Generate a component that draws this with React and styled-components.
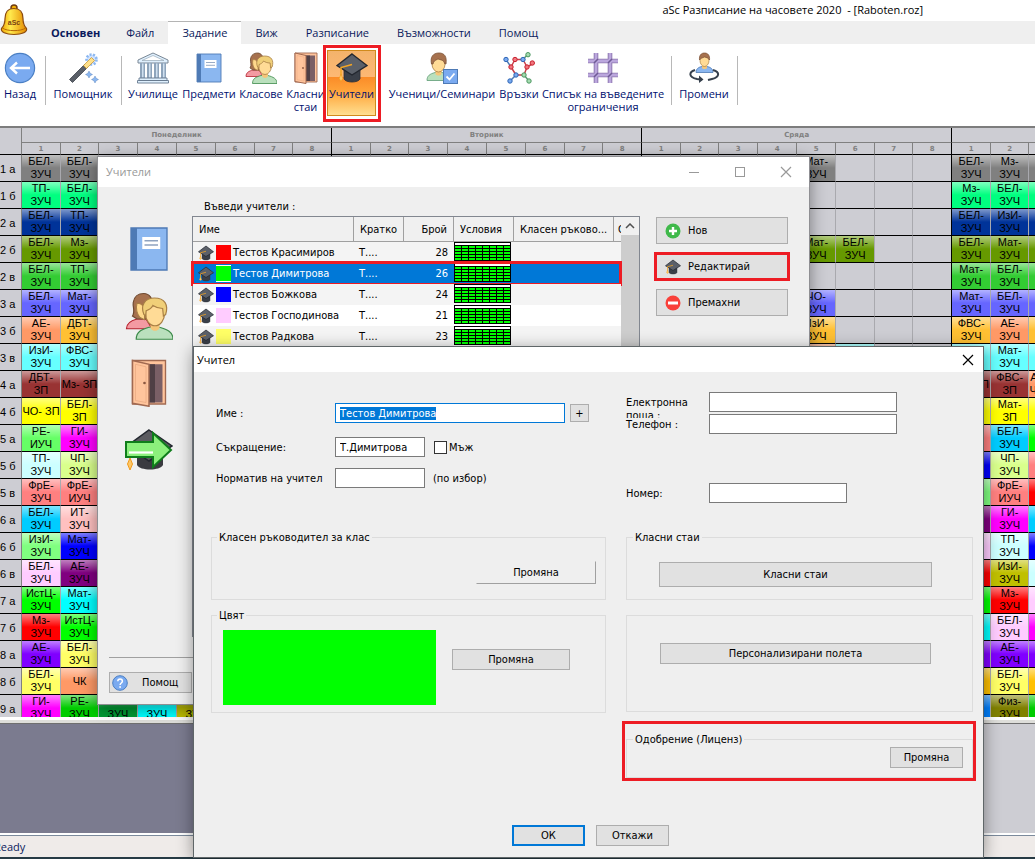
import React, { useEffect, useRef } from 'react';
import styled, { createGlobalStyle, css } from 'styled-components';

const UI = '"Open Sans", "Noto Sans", sans-serif';
const DIALOG = '"DejaVu Sans Condensed", "DejaVu Sans", sans-serif';
const GRID = '"Liberation Sans", Arial, sans-serif';
const RED = '#ed1c24';

const GlobalStyle = createGlobalStyle`
  *, *::before, *::after { box-sizing: border-box; }
  body { margin: 0; background: #fff; font-family: ${UI}; font-size: 11px; color: #000; }
  button, input { font: inherit; color: inherit; margin: 0; }
  ::selection { background: #0078d7; color: #fff; }
`;

/* ---------- icons ---------- */

const Icon = ({ size = 32, children, box = '0 0 32 32' }) => (
  <svg width={size} height={size} viewBox={box} aria-hidden="true">{children}</svg>
);

const BackIcon = () => (
  <Icon>
    <circle cx="16" cy="16" r="14.6" fill="#7aaaf0" stroke="#4a7fc4" strokeWidth="1.2" />
    <path d="M26 16H8M13 10.5L7 16l6 5.5" fill="none" stroke="#fff" strokeWidth="2.4" />
  </Icon>
);

const WandIcon = () => (
  <Icon>
    <circle cx="24.500" cy="7.500" r="5" fill="#cfe2ff" stroke="#8bb7f0" strokeWidth="2.600" strokeDasharray="2 1.500" />
    <path d="M2.500 27.500L18 12l3 3L5.500 30.500z" fill="#5a5f68" stroke="#3c414a" strokeWidth=".8" />
    <path d="M16.500 13.500l8-8 3 3-8 8z" fill="#ffe08a" stroke="#c99a3a" strokeWidth=".8" />
    <path d="M22 19l1.200 2.300L25.500 22.500l-2.300 1.200L22 26l-1.200-2.300L18.500 22.500l2.300-1.200zM28 24l1.200 2.300L31.500 27.500l-2.300 1.200L28 31l-1.200-2.300L24.500 27.500l2.300-1.200z" fill="#8bb7f0" stroke="#4e7ab5" strokeWidth=".4" />
  </Icon>
);

const SchoolIcon = () => (
  <Icon>
    <path d="M1 8L16 1l15 7v3H1z" fill="#dff0fe" stroke="#7a8795" />
    <path d="M5 8.500L16 3.500l11 5z" fill="#fff" stroke="#98a9b8" strokeWidth=".7" />
    <path d="M3 11h5v15h-5zM10 11h5v15h-5zM17 11h5v15h-5zM24 11h5v15h-5z" fill="#8ea4bb" />
    <path d="M5 11.500h1.500v14H5zM12 11.500h1.500v14H12zM19 11.500h1.500v14H19zM26 11.500h1.500v14H26z" fill="#cfe0f0" />
    <path d="M2 26h28v2.500H2zM.5 28.500h31V31H.5z" fill="#dff0fe" stroke="#66798f" strokeWidth=".9" />
  </Icon>
);

const BookIcon = ({ size }) => (
  <Icon size={size}>
    <path d="M4 2h24v28H4z" fill="#8bb7f0" stroke="#4e7ab5" strokeWidth=".9" />
    <path d="M4 2h4v28H4z" fill="#4e7ab5" />
    <path d="M11.500 8h12v8h-12z" fill="#fff" />
    <path d="M13 10.500h9M13 13.300h9" stroke="#8fa3c0" strokeWidth=".9" />
  </Icon>
);

const PeopleIcon = ({ size }) => (
  <Icon size={size}>
    <path d="M1 24.500c0-4 3-5.500 7-6.500h6l4 6.500z" fill="#f49aa2" stroke="#b5202d" strokeWidth=".8" />
    <path d="M5 16c2-3 0-6 .5-9C6 3 9 1 12.500 1S19 4 18 10l-3 8H8z" fill="#a6714e" stroke="#6f4a30" strokeWidth=".8" />
    <path d="M8 7.500c3 0 5 2 5 6v5l-3-1.500c-2-2-3-6-2-9.500z" fill="#ffd98c" stroke="#a87f45" strokeWidth=".7" />
    <path d="M7.500 31.500c0-5 3.500-6.500 8.500-8h7c5 1.500 9 3 9 8z" fill="#bae0bd" stroke="#3c8a4a" strokeWidth=".8" />
    <path d="M17 20h6v4c-1 2.500-5 2.500-6 0z" fill="#f5c679" />
    <ellipse cx="20" cy="14" rx="6.400" ry="8.500" fill="#ffdb96" stroke="#a87f45" strokeWidth=".8" />
    <path d="M12.600 15c-2.500-6 .5-11 7-11 7 0 9.500 4.500 7.500 11l-1.500 1-.5-5c-3 0-5-1-6.500-2-1 2-3 3-4.500 3.500l-.3 3.500z" fill="#f0cf78" stroke="#a87f45" strokeWidth=".8" />
  </Icon>
);

const DoorIcon = ({ size }) => (
  <Icon size={size}>
    <path d="M5 1h22v29H5z" fill="#ffc49c" stroke="#a16951" strokeWidth=".9" />
    <path d="M15 3.500h10V29H15z" fill="#7a5f66" />
    <path d="M15 3.500h5V29h-5z" fill="#4f3f45" />
    <path d="M5 1l11 2.500V31.500L5 29.500z" fill="#ffc49c" stroke="#a16951" strokeWidth="1" />
    <path d="M7 3.500l7 1.700V29l-7-1.300z" fill="none" stroke="#e8a982" strokeWidth=".5" />
    <circle cx="13" cy="16" r=".9" fill="#8b5741" />
  </Icon>
);

const CapIcon = ({ size }) => (
  <Icon size={size}>
    <path d="M8 15h16v12c-2 4-14 4-16 0z" fill="#3a3f48" stroke="#2b2f37" strokeWidth=".8" />
    <path d="M16 2L31 13.500 16 23 1 13.500z" fill="#5b6069" stroke="#23272f" strokeWidth="1.400" />
    <path d="M16 12.500L5 15.500V24" fill="none" stroke="#f5a623" strokeWidth="1.500" />
    <path d="M5 22l1.800 4.500L5 29.500 3.200 26.500z" fill="#ffc766" stroke="#f0991a" strokeWidth=".6" />
  </Icon>
);

const CapArrowIcon = ({ size }) => (
  <Icon size={size} box="0 0 48 48">
    <path d="M12 28h26v11c-3 6-23 6-26 0z" fill="#3a3a40" />
    <path d="M24 4l23 16-23 15L2 20z" fill="#5b5b60" stroke="#23272f" strokeWidth="1.500" />
    <path d="M5 32l2.500 6L5 44l-2.500-6z" fill="#ffc766" stroke="#f0991a" />
    <path d="M1 16h27V7l18 17-18 17v-10H1z" fill="#8cf07c" stroke="#0f7d1b" strokeWidth="2" />
    <path d="M4 26.500h24" stroke="#fff" strokeWidth="2.200" />
  </Icon>
);

const StudentIcon = () => (
  <Icon>
    <path d="M1 28.500c0-5 3-6.500 8-8h7c5 1.500 9 3 9 8z" fill="#bae0bd" stroke="#5e9c76" strokeWidth=".8" />
    <path d="M9.500 17h6v5c-1 2-5 2-6 0z" fill="#f5c679" />
    <ellipse cx="12.500" cy="12" rx="6.500" ry="8" fill="#ffdb96" stroke="#a87f45" strokeWidth=".8" />
    <path d="M5.500 12C4 5 7 1 13 1c5.500 0 8 3.500 7 11l-1.500-.5C18 8 15 8 12 7c-1.500 1-4 1-5 5z" fill="#a6714e" stroke="#7a4f33" strokeWidth=".8" />
    <rect x="17.500" y="17.500" width="14" height="14" fill="#7aaaf0" stroke="#4e7ab5" />
    <path d="M20.500 24.500l3 3 5-6" fill="none" stroke="#fff" strokeWidth="1.800" />
  </Icon>
);

const LinksIcon = () => (
  <Icon>
    <path d="M12 7.500h8M8 15l4-7.500M20 7.500l4 7.500M8 15l5 8M24 15l-3 8M13 23h8" stroke="#c8414b" strokeWidth="1.500" />
    <path d="M3 7.500L8 15M13 23l-6 6" stroke="#4e7ab5" strokeWidth="1.500" />
    <path d="M20 7.500L25 2M21 23l5 6" stroke="#5e9c76" strokeWidth="1.500" />
    <path d="M24 15l7-4" stroke="#c8414b" strokeWidth="1.500" />
    <g strokeWidth="1">
      <g fill="#f0767f" stroke="#c8212e"><circle cx="12" cy="7.500" r="2.200" /><circle cx="8" cy="15" r="2.200" /><circle cx="24" cy="15" r="2.200" /><circle cx="29.300" cy="11" r="2.200" /></g>
      <g fill="#7aaaf0" stroke="#2f66b5"><circle cx="3" cy="7.500" r="2.200" /><circle cx="20" cy="7.500" r="2.200" /><circle cx="13" cy="23" r="2.200" /><circle cx="7" cy="29" r="2.200" /></g>
      <g fill="#a5dcb0" stroke="#4a9560"><circle cx="25" cy="2.700" r="2.200" /><circle cx="21" cy="23" r="2.200" /><circle cx="26" cy="29" r="2.200" /></g>
    </g>
  </Icon>
);

const FenceIcon = () => (
  <Icon>
    <path d="M9 1v30M23 1v30M1 9h30M1 23h30" stroke="#8a74ad" strokeWidth="4.600" />
    <path d="M9 1v30M23 1v30M1 9h30M1 23h30" stroke="#bba7dd" strokeWidth="2.800" />
    <path d="M7 11l4-4M21 11l4-4M7 25l4-4M21 25l4-4" stroke="#6f5b95" strokeWidth="1.600" />
  </Icon>
);

const ChangeIcon = () => (
  <Icon>
    <path d="M8 20.500c0-4 3-5.500 6-6h5c3 .5 6 2 6 6z" fill="#8bb7f0" stroke="#4e7ab5" strokeWidth=".8" />
    <path d="M14 12h5v4c-1 1.500-4 1.500-5 0z" fill="#f5c679" />
    <ellipse cx="16.500" cy="8.500" rx="4.500" ry="6" fill="#ffdb96" stroke="#a87f45" strokeWidth=".7" />
    <path d="M11.500 8C11 3.500 13 1 16.500 1S22 3.500 21.500 8c-1-2-3-2.500-5-3-2 1-4 1-5 3z" fill="#a6714e" stroke="#7a4f33" strokeWidth=".7" />
    <path d="M7 18c-6 2-7 7 2 9l5 .8M25 18c7 2 7 7-1 9l-4 1" fill="none" stroke="#36404d" strokeWidth="2" />
    <path d="M11 23.500l4.500 4-4.500 3.500z" fill="#36404d" />
  </Icon>
);

const BellIcon = () => (
  <svg width="28" height="32" viewBox="0 0 28 32" role="img" aria-label="aSc">
    <defs>
      <linearGradient id="bell" x1="0" x2="1">
        <stop offset="0" stopColor="#f0a400" />
        <stop offset=".35" stopColor="#ffe94d" />
        <stop offset="1" stopColor="#e58a00" />
      </linearGradient>
    </defs>
    <circle cx="14" cy="4" r="3" fill="#f5b000" stroke="#6e3c12" strokeWidth="1.500" />
    <path d="M14 4.500c6.500 0 9 4.500 9 10 0 5 .5 7 3.500 10 1 3.500-4 6-12.500 6S.5 28 1.500 24.500C4.500 21.500 5 19.500 5 14.500c0-5.500 2.500-10 9-10z" fill="url(#bell)" stroke="#8a4a10" strokeWidth="1.200" />
    <path d="M2.500 24c4 3.500 19 3.500 23 0" fill="none" stroke="#b86a08" />
    <text x="14" y="21" textAnchor="middle" fontSize="7" fontWeight="700" fontFamily="Liberation Sans, sans-serif" fill="#7a4312">aSc</text>
  </svg>
);

const PlusIcon = () => (
  <Icon size={16} box="0 0 16 16"><circle cx="8" cy="8" r="7.500" fill="#3fb94a" /><path d="M8 4v8M4 8h8" stroke="#fff" strokeWidth="2.400" /></Icon>
);
const MinusIcon = () => (
  <Icon size={16} box="0 0 16 16"><circle cx="8" cy="8" r="7.500" fill="#f9403a" /><path d="M3 8h10" stroke="#fff" strokeWidth="3" /></Icon>
);
const HelpIcon = () => (
  <Icon size={16} box="0 0 16 16">
    <circle cx="8" cy="8" r="7.300" fill="#7aaaf0" stroke="#4a7fc4" />
    <path d="M5.800 6.200c0-3 4.600-3 4.600 0 0 1.800-2.300 1.800-2.300 3.700" fill="none" stroke="#fff" strokeWidth="1.500" />
    <circle cx="8.100" cy="12" r=".9" fill="#fff" />
  </Icon>
);

const ConditionGrid = () => (
  <svg width="57" height="19" viewBox="0 0 57 19" shapeRendering="crispEdges" role="img" aria-label="Условия">
    <rect width="57" height="19" fill="#000" />
    <rect x="1" y="1" width="55" height="2" fill="#fff" />
    {[0, 1, 2, 3, 4].map((r) =>
      [0, 1, 2, 3, 4, 5, 6, 7].map((c) => (
        <rect key={`${r}${c}`} x={1 + c * 7} y={4 + r * 3} width="6" height="2" fill="#0f0" />
      ))
    )}
  </svg>
);

const WindowGlyph = ({ kind }) => (
  <svg width="12" height="12" viewBox="0 0 12 12" aria-hidden="true" fill="none" stroke="currentColor">
    {kind === 'min' && <path d="M1 6.500h10" />}
    {kind === 'max' && <rect x="1.500" y="1.500" width="9" height="9" />}
    {kind === 'close' && <path d="M1 1l10 10M11 1L1 11" strokeWidth="1.200" />}
  </svg>
);

/* ---------- main window ---------- */

const Desktop = styled.main`
  position: relative;
  display: flex;
  flex-direction: column;
  height: 100vh;
  overflow: hidden;
`;

const TitleBar = styled.header`
  position: relative;
  display: flex;
  justify-content: flex-end;
  height: 21px;
  padding-right: 112px;
`;

const AppTitle = styled.h1`
  margin: 0;
  font-size: 11px;
  font-weight: 400;
  line-height: 20px;
  white-space: pre;
`;

const AppLogo = styled.span`
  position: absolute;
  left: 0;
  top: 4px;
  z-index: 1;
`;

const TabBar = styled.nav`
  display: flex;
  flex: none;
  height: 23px;
  padding-left: 37px;
  background: #efefef;
`;

const Tab = styled.button`
  padding: 0 ${(p) => (p.$strong ? 12 : 14)}px 0 14px;
  border: 0;
  border-top: 1px solid ${(p) => (p.$active ? '#b4b4b4' : 'transparent')};
  background: ${(p) => (p.$active ? '#fff' : 'transparent')};
  color: #0a1a5c;
  font-weight: ${(p) => (p.$strong ? 700 : 400)};
  line-height: 22px;
  white-space: nowrap;
`;

const Ribbon = styled.section`
  display: flex;
  flex: none;
  align-items: flex-start;
  height: 82px;
  padding-top: 6px;
`;

const frame = css`
  &::after {
    content: '';
    position: absolute;
    border: 3px solid ${RED};
    pointer-events: none;
  }
`;

const RibbonButton = styled.button`
  position: relative;
  display: flex;
  flex: none;
  flex-direction: column;
  align-items: center;
  gap: 3px;
  width: ${(p) => p.$w}px;
  height: 66px;
  margin-left: ${(p) => (p.$spaced ? 10 : 0)}px;
  padding: 2px 0 0;
  border: 0;
  background: transparent;
  color: #00106e;
  line-height: 13px;
  white-space: nowrap;
  ${(p) => p.$active && css`
    border: 1px solid #d08a1c;
    padding-top: 1px;
    background: linear-gradient(#f3b36b 0, #fdb874 40%, #fb8c28 41%, #ffa63c 65%, #ffdf90 100%);
    ${frame}
    &::after { inset: -6px -6px -7px -5px; }
  `}
`;

const RibbonDivider = styled.span`
  flex: none;
  width: 1px;
  height: 49px;
  margin: 6px 4px 0 5px;
  background: #b8b8b8;
`;

const TimetableView = styled.section`
  flex: 1 1 0;
  min-height: 0;
  overflow: hidden;
  border-top: 2px solid #7d7d7d;
  background: #cdcdd3;
`;

const Timetable = styled.table`
  width: 1261px;
  table-layout: fixed;
  border-collapse: separate;
  border-spacing: 0;
  font-family: ${GRID};
  font-size: 11px;
  line-height: 13px;
`;

const DayHead = styled.th`
  height: 15px;
  padding: 0;
  border-right: 1px solid #000;
  border-bottom: 1px solid #808080;
  color: #808080;
  font: 700 7px/12px "DejaVu Sans", sans-serif;
`;

const HourHead = styled.th`
  height: 12px;
  padding: 0;
  border-right: 1px solid ${(p) => (p.$last ? '#000' : '#808080')};
  border-bottom: 1px solid #000;
  color: #808080;
  font: 700 7px/10px "DejaVu Sans", sans-serif;
`;

const CornerHead = styled.th`
  padding: 0;
  border-right: 1px solid #808080;
  border-bottom: 1px solid #000;
`;

const ClassHead = styled.th`
  height: 27px;
  padding: 2px 0 0;
  border-right: 1px solid #808080;
  border-bottom: 1px solid #000;
  font-weight: 400;
  text-align: left;
  white-space: nowrap;
`;

const Lesson = styled.td`
  height: 27px;
  padding: 0;
  overflow: hidden;
  border-right: 1px solid ${(p) => (p.$last ? '#000' : '#a9a9ae')};
  border-bottom: 1px solid #000;
  text-align: center;
  white-space: pre;
  ${(p) => p.$color && css`
    background: linear-gradient(rgba(255, 255, 255, .5), rgba(255, 255, 255, 0) 50%) ${p.$color};
  `}
`;

const Splitter = styled.div`
  flex: none;
  height: 7px;
  border-top: 3px solid #fff;
  border-bottom: 1px solid #6f6f6f;
  background: #dededa;
`;

const LowerPanel = styled.section`
  display: flex;
  flex: none;
  height: 109px;
  background: #cdcdd3;
`;

const PreviewPane = styled.div`
  flex: 0 0 60%;
  background: #7b7b8f;
`;

const StatusBar = styled.footer`
  flex: none;
  height: 26px;
  overflow: hidden;
  border-top: 2px solid #fff;
  border-bottom: 2px solid #263a44;
  background: #efebe9;
  color: #0a1a5c;
  line-height: 24px;
  text-indent: -6px;
  box-shadow: inset 0 1px #7b8a9c;
`;

/* ---------- shared dialog parts ---------- */

const Dialog = styled.section`
  position: absolute;
  left: ${(p) => p.$x}px;
  top: ${(p) => p.$y}px;
  display: flex;
  flex-direction: column;
  width: ${(p) => p.$w}px;
  height: ${(p) => p.$h}px;
  background: #efefef;
  box-shadow: 0 0 0 1px ${(p) => (p.$front ? '#5f6668' : '#8f8f93')}, 0 3px 16px rgba(0, 0, 0, .45);
  font-family: ${DIALOG};
  font-size: 11px;
  line-height: 13px;
`;

const DialogTitle = styled.header`
  display: flex;
  flex: none;
  align-items: center;
  justify-content: space-between;
  height: ${(p) => p.$h}px;
  padding-left: ${(p) => p.$pad}px;
  background: #fff;
  color: ${(p) => (p.$muted ? '#999' : '#000')};
  h2 { margin: 0; font: 400 11px/16px ${UI}; }
`;

const Controls = styled.div`
  display: flex;
  align-self: stretch;
`;

const ControlButton = styled.button`
  display: grid;
  place-items: center;
  width: ${(p) => p.$w}px;
  padding: 0;
  border: 0;
  background: transparent;
`;

const PushButton = styled.button`
  position: relative;
  display: flex;
  flex: none;
  align-items: center;
  justify-content: ${(p) => (p.$start ? 'flex-start' : 'center')};
  gap: 7px;
  width: ${(p) => p.$w}px;
  height: ${(p) => p.$h || 21}px;
  padding: 0 ${(p) => (p.$start ? 8 : 0)}px;
  border: ${(p) => (p.$primary ? '2px solid #0078d7' : '1px solid #adadad')};
  background: #e1e1e1;
  white-space: nowrap;
  ${(p) => p.$flat && css`
    border-color: transparent #a0a0a0 #a0a0a0 transparent;
    background: transparent;
  `}
  ${(p) => p.$framed && css`
    ${frame}
    &::after { inset: -2px -3px; }
  `}
`;

const HelpButton = styled(PushButton)`
  gap: 14px;
  padding-left: 2px;
`;

/* ---------- teachers list dialog ---------- */

const ListBody = styled.div`
  display: flex;
  flex: 1;
  min-height: 0;
`;

const SideNav = styled.nav`
  display: flex;
  flex: none;
  flex-direction: column;
  align-items: flex-start;
  gap: 19px;
  width: 94px;
  padding: 38px 0 0 27px;
`;

const SideButton = styled.button`
  display: block;
  width: 48px;
  height: 48px;
  padding: 0;
  border: 0;
  background: transparent;
  svg { display: block; }
`;

const ListColumn = styled.div`
  display: flex;
  flex: 1;
  flex-direction: column;
  padding-top: 13px;
`;

const ListCaption = styled.h3`
  margin: 0 0 2px 12px;
  font-size: 11px;
  font-weight: 400;
  line-height: 14px;
`;

const ListBox = styled.div`
  display: flex;
  height: 421px;
  border: 1px solid #828790;
  background: #fff;
`;

const TeacherTable = styled.table`
  flex: none;
  align-self: flex-start;
  width: 428px;
  table-layout: fixed;
  border-collapse: separate;
  border-spacing: 0;
`;

const ColumnHead = styled.th`
  height: 25px;
  padding: 0 6px;
  overflow: hidden;
  border-right: 1px solid #a0a0a0;
  border-bottom: 1px solid #a0a0a0;
  background: #f0f0f0;
  font-weight: 400;
  text-align: ${(p) => (p.$right ? 'right' : 'left')};
  white-space: nowrap;
`;

const CutColumnHead = styled(ColumnHead)`
  padding: 0 0 0 4px;
  border-right: 0;
`;

const TeacherRow = styled.tr`
  position: relative;
  background: ${(p) => (p.$selected ? '#0078d7' : p.$odd ? '#f4f4f4' : '#fff')};
  color: ${(p) => (p.$selected ? '#fff' : '#000')};
  ${(p) => p.$selected && css`
    ${frame}
    &::after { inset: -2px -1px -2px -2px; }
  `}
`;

const TeacherCell = styled.td`
  height: 21px;
  padding: 0 6px 0 5px;
  overflow: hidden;
  text-align: ${(p) => (p.$right ? 'right' : 'left')};
  white-space: nowrap;
`;

const GridCell = styled(TeacherCell)`
  padding: 0;
  svg { display: block; margin-bottom: 2px; }
`;

const NameLine = styled.div`
  display: flex;
  align-items: center;
  gap: 2px;
`;

const Swatch = styled.span`
  width: 15px;
  height: 17px;
  border: solid ${(p) => (p.$selected ? '#fff' : 'transparent')};
  border-width: 1px 0;
  background: ${(p) => p.$color} padding-box;
`;

const ScrollTrack = styled.div`
  display: flex;
  flex: 1;
  flex-direction: column;
  background: #f0f0f0;
  color: #505050;
`;

const ScrollArrow = styled.button`
  display: grid;
  place-items: center;
  height: 18px;
  padding: 0;
  border: 0;
  background: transparent;
`;

const ScrollThumb = styled.div`
  height: 240px;
  background: #cdcdcd;
`;

const Actions = styled.div`
  display: flex;
  flex: none;
  flex-direction: column;
  gap: 9px;
  padding: 30px 21px 0 16px;
`;

const ListFooter = styled.footer`
  flex: none;
  height: 47px;
  margin: 0 11px;
  padding-top: 14px;
  border-top: 1px solid #a0a0a0;
`;

/* ---------- teacher dialog ---------- */

const Form = styled.form`
  display: flex;
  flex: 1;
  flex-direction: column;
`;

const FormColumns = styled.div`
  display: grid;
  grid-template-columns: 395px 347px;
  gap: 20px;
  padding-left: 17px;
`;

const FormColumn = styled.div`
  display: flex;
  flex-direction: column;
  padding-top: ${(p) => p.$top}px;
`;

const Fields = styled.div`
  display: grid;
  grid-template-rows: ${(p) => p.$rows};
  padding-left: ${(p) => p.$pad || 0}px;
`;

const Field = styled.div`
  display: flex;
  align-items: center;
  height: 20px;
`;

const FieldLabel = styled.label`
  flex: none;
  width: ${(p) => p.$w}px;
  ${(p) => p.$multi && css`
    align-self: flex-start;
    max-height: 22px;
    margin-top: 4px;
    overflow: hidden;
  `}
`;

const TextInput = styled.input`
  flex: none;
  width: ${(p) => p.$w}px;
  height: 20px;
  padding: 0 4px;
  border: 1px solid #7a7a7a;
  border-radius: 0;
  background: #fff;
  outline: 0;
  &:focus { border-color: #0078d7; }
`;

const CheckLabel = styled.label`
  display: flex;
  align-items: center;
  gap: 2px;
  margin-left: 9px;
`;

const CheckBox = styled.input`
  appearance: none;
  width: 13px;
  height: 13px;
  border: 1px solid #333;
  background: #fff;
`;

const Hint = styled.span`
  margin-left: 8px;
`;

const AddButton = styled(PushButton)`
  margin-left: 5px;
`;

const Group = styled.fieldset`
  display: flex;
  align-items: flex-start;
  justify-content: ${(p) => p.$justify || 'center'};
  gap: 16px;
  min-width: 0;
  height: ${(p) => p.$h}px;
  margin: ${(p) => p.$mt || 0}px 0 0;
  padding: ${(p) => p.$pad};
  border: 1px solid #dcdcdc;
`;

const FramedArea = styled.div`
  position: relative;
  margin-top: 20px;
  ${frame}
  &::after { inset: -11px -3px -3px -4px; }
`;

const Legend = styled.legend`
  padding: 2px 2px 0;
  line-height: 12px;
  margin-left: ${(p) => p.$indent || 0}px;
`;

const ColourBox = styled.div`
  width: 213px;
  height: 75px;
  background: #0f0;
`;

const ColourAction = styled.div`
  padding-top: 19px;
`;

const FormFooter = styled.footer`
  display: flex;
  justify-content: center;
  gap: 11px;
  margin-top: auto;
  padding: 0 0 11px 4px;
`;

/* ---------- data ---------- */

const TABS = ['Основен', 'Файл', 'Задание', 'Виж', 'Разписание', 'Възможности', 'Помощ'];
const DAYS = ['Понеделник', 'Вторник', 'Сряда', 'Четвъртък'];
const HOUR_WIDTHS = [39, 38, 39, 39, 39, 39, 38, 39];

const GREY = '#808080', MINT = '#00ff80', NAVY = '#003399', OLIVE = '#669900', GREEN = '#33cc33';
const PERI = '#6666ff', PEACH = '#ff9966', AMBER = '#ffc033', AQUA = '#66ffff', BROWN = '#993333';
const YELLOW = '#ffff00', SALMON = '#ff8080', SKY = '#00ccff', PINK = '#ffccff', PURPLE = '#800080';
const LIME = '#00ff00', RED_CELL = '#ff0000', VIOLET = '#8000ff', LEMON = '#ffff66', MAGENTA = '#ff00ff';

/* Lessons are keyed by the hour's position in the week, eight hours a day. */
const ROWS = [
  ['1 а', { 0: ['БЕЛ- ЗУЧ', GREY], 1: ['БЕЛ- ЗУЧ', GREY], 20: ['Мат- ЗУЧ', GREY], 24: ['БЕЛ- ЗУЧ', GREY], 25: ['Мз- ЗУЧ', GREY], 26: ['', GREY] }],
  ['1 б', { 0: ['ТП- ЗУЧ', MINT], 1: ['БЕЛ- ЗУЧ', MINT], 24: ['Мз- ЗУЧ', MINT], 25: ['БЕЛ- ЗУЧ', MINT], 26: ['', MINT] }],
  ['2 а', { 0: ['БЕЛ- ЗУЧ', NAVY], 1: ['ТП- ЗУЧ', NAVY], 24: ['БЕЛ- ЗУЧ', NAVY], 25: ['ИзИ- ЗУЧ', NAVY], 26: ['', NAVY] }],
  ['2 б', { 0: ['БЕЛ- ЗУЧ', OLIVE], 1: ['Мз- ЗУЧ', OLIVE], 20: ['Мат- ЗУЧ', OLIVE], 21: ['БЕЛ- ЗУЧ', OLIVE], 24: ['БЕЛ- ЗУЧ', OLIVE], 25: ['Мат- ЗУЧ', OLIVE], 26: ['', OLIVE] }],
  ['2 в', { 0: ['БЕЛ- ЗУЧ', GREEN], 1: ['ТП- ЗУЧ', GREEN], 24: ['Мат- ЗУЧ', GREEN], 25: ['БЕЛ- ЗУЧ', GREEN], 26: ['', GREEN] }],
  ['3 а', { 0: ['БЕЛ- ЗУЧ', PERI], 1: ['Мат- ЗУЧ', PERI], 20: ['ЧО- ЗУЧ', PERI], 24: ['Мат- ЗУЧ', PERI], 25: ['БЕЛ- ЗУЧ', PERI], 26: ['', PERI] }],
  ['3 б', { 0: ['АЕ- ЗУЧ', PEACH], 1: ['ДБТ- ЗУЧ', AMBER], 20: ['ИзИ- ЗУЧ', AMBER], 24: ['ФВС- ЗУЧ', AMBER], 25: ['АЕ- ЗУЧ', PEACH], 26: ['', AMBER] }],
  ['3 в', { 0: ['ИзИ- ЗУЧ', AQUA], 1: ['ФВС- ЗУЧ', AQUA], 20: ['', PEACH], 21: ['', AQUA], 24: ['', AQUA], 25: ['Мат- ЗУЧ', AQUA], 26: ['', AQUA] }],
  ['4 а', { 0: ['ДБТ- ЗП', BROWN], 1: ['Мз-~ЗП', BROWN], 24: ['Мз-~ЗП', BROWN], 25: ['ФВС- ЗП', BROWN], 26: ['АЕ-~ЗП ЧО-~ЗП', PEACH] }],
  ['4 б', { 0: ['ЧО-~ЗП', YELLOW], 1: ['БЕЛ- ЗП', YELLOW], 24: ['', YELLOW], 25: ['Мат- ЗП', YELLOW], 26: ['', YELLOW] }],
  ['5 а', { 0: ['РЕ- ИУЧ', '#66ff66'], 1: ['ГИ- ЗУЧ', MAGENTA], 24: ['', SALMON], 25: ['БЕЛ- ЗУЧ', SKY], 26: ['', LIME] }],
  ['5 б', { 0: ['ТП- ЗУЧ', '#ccffff'], 1: ['ЧП- ЗУЧ', '#d9ff8c'], 24: ['', '#0000ff'], 25: ['ЧП- ЗУЧ', '#d9ff8c'], 26: ['', SALMON] }],
  ['5 в', { 0: ['ФрЕ- ЗУЧ', SALMON], 1: ['ФрЕ- ИУЧ', SALMON], 24: ['', '#80ff80'], 25: ['ФрЕ- ИУЧ', SALMON], 26: ['', RED_CELL] }],
  ['6 а', { 0: ['БЕЛ- ЗУЧ', SKY], 1: ['ИТ- ЗУЧ', '#ffc0c0'], 24: ['', PURPLE], 25: ['ГИ- ЗУЧ', MAGENTA], 26: ['', SKY] }],
  ['6 б', { 0: ['ИзИ- ЗУЧ', '#80ff80'], 1: ['Мат- ЗУЧ', '#0000ff'], 24: ['', PINK], 25: ['ТП- ЗУЧ', '#ccffff'], 26: ['', '#0000ff'] }],
  ['6 в', { 0: ['БЕЛ- ЗУЧ', PINK], 1: ['АЕ- ЗУЧ', PURPLE], 24: ['', RED_CELL], 25: ['ИзИ- ЗУЧ', '#c0c000'], 26: ['', '#ccffff'] }],
  ['7 а', { 0: ['ИстЦ- ЗУЧ', LIME], 1: ['Мат- ЗУЧ', '#00ffff'], 24: ['', LIME], 25: ['Мз- ЗУЧ', RED_CELL], 26: ['', PINK] }],
  ['7 б', { 0: ['Мз- ЗУЧ', RED_CELL], 1: ['ИстЦ- ЗУЧ', LIME], 24: ['', '#00ffff'], 25: ['БЕЛ- ЗУЧ', PINK], 26: ['', MAGENTA] }],
  ['8 а', { 0: ['АЕ- ЗУЧ', VIOLET], 1: ['БЕЛ- ЗУЧ', LEMON], 24: ['', VIOLET], 25: ['АЕ- ЗУЧ', VIOLET], 26: ['', VIOLET] }],
  ['8 б', { 0: ['БЕЛ- ЗУЧ', LEMON], 1: ['ЧК', PEACH], 24: ['', '#ffc000'], 25: ['БЕЛ- ЗУЧ', LEMON], 26: ['', '#ffc000'] }],
  ['9 а', { 0: ['ГИ- ЗУЧ', MAGENTA], 1: ['РЕ- ЗУЧ', '#00cc00'], 2: ['АЕ- ЗУЧ', '#009933'], 3: ['Мат- ЗУЧ', '#00ffff'], 4: ['ИзИ- ЗУЧ', '#c0c000'], 24: ['', '#0080ff'], 25: ['Физ- ЗУЧ', '#808000'], 26: ['', '#00cc00'] }],
];

const TEACHERS = [
  ['Тестов Красимиров', 28, '#ff0000'],
  ['Тестов Димитрова', 26, '#00ff00'],
  ['Тестов Божкова', 24, '#0000ff'],
  ['Тестов Господинова', 21, '#ffccff'],
  ['Тестов Радкова', 23, '#ffff66'],
];

/* A space starts the second line; a tilde keeps both parts on one line. */
const lessonText = (text) => text.replace(' ', '\n').replaceAll('~', ' ');

/* ---------- views ---------- */

function WeekTable() {
  const hours = Array.from({ length: 32 }, (_, i) => i);
  return (
    <Timetable>
      <colgroup>
        <col width="22" />
        {hours.map((h) => <col key={h} width={HOUR_WIDTHS[h % 8]} />)}
      </colgroup>
      <thead>
        <tr>
          <CornerHead rowSpan={2} />
          {DAYS.map((d) => <DayHead key={d} colSpan={8}>{d}</DayHead>)}
        </tr>
        <tr>{hours.map((h) => <HourHead key={h} $last={h % 8 === 7}>{(h % 8) + 1}</HourHead>)}</tr>
      </thead>
      <tbody>
        {ROWS.map(([name, lessons]) => (
          <tr key={name}>
            <ClassHead scope="row">{name}</ClassHead>
            {hours.map((h) => (
              <Lesson key={h} $last={h % 8 === 7} $color={lessons[h] && lessons[h][1]}>
                {lessons[h] ? lessonText(lessons[h][0]) : null}
              </Lesson>
            ))}
          </tr>
        ))}
      </tbody>
    </Timetable>
  );
}

function TeachersDialog() {
  return (
    <Dialog $x={98} $y={157} $w={711} $h={547} aria-label="Учители">
      <DialogTitle $h={30} $pad={8} $muted>
        <h2>Учители</h2>
        <Controls>
          <ControlButton $w={46} aria-label="Минимизирай"><WindowGlyph kind="min" /></ControlButton>
          <ControlButton $w={46} aria-label="Максимизирай"><WindowGlyph kind="max" /></ControlButton>
          <ControlButton $w={46} aria-label="Затвори"><WindowGlyph kind="close" /></ControlButton>
        </Controls>
      </DialogTitle>
      <ListBody>
        <SideNav>
          <SideButton aria-label="Предмети"><BookIcon size={48} /></SideButton>
          <SideButton aria-label="Класове"><PeopleIcon size={48} /></SideButton>
          <SideButton aria-label="Класни стаи"><DoorIcon size={48} /></SideButton>
          <SideButton aria-label="Учители"><CapArrowIcon size={48} /></SideButton>
        </SideNav>
        <ListColumn>
          <ListCaption>Въведи учители :</ListCaption>
          <ListBox>
            <TeacherTable>
              <colgroup>
                <col width="161" /><col width="50" /><col width="50" /><col width="60" /><col width="100" /><col width="7" />
              </colgroup>
              <thead>
                <tr>
                  <ColumnHead>Име</ColumnHead>
                  <ColumnHead>Кратко</ColumnHead>
                  <ColumnHead $right>Брой</ColumnHead>
                  <ColumnHead>Условия</ColumnHead>
                  <ColumnHead>Класен ръково...</ColumnHead>
                  <CutColumnHead>О</CutColumnHead>
                </tr>
              </thead>
              <tbody>
                {TEACHERS.map(([name, count, color], i) => (
                  <TeacherRow key={name} $odd={i % 2 === 0} $selected={i === 1}>
                    <TeacherCell>
                      <NameLine><CapIcon size={16} /><Swatch $color={color} $selected={i === 1} />{name}</NameLine>
                    </TeacherCell>
                    <TeacherCell>Т....</TeacherCell>
                    <TeacherCell $right>{count}</TeacherCell>
                    <GridCell><ConditionGrid /></GridCell>
                    <TeacherCell />
                    <TeacherCell />
                  </TeacherRow>
                ))}
              </tbody>
            </TeacherTable>
            <ScrollTrack>
              <ScrollArrow aria-label="Нагоре">
                <svg width="10" height="6" viewBox="0 0 10 6" aria-hidden="true"><path d="M1 5l4-4 4 4" fill="none" stroke="currentColor" strokeWidth="1.500" /></svg>
              </ScrollArrow>
              <ScrollThumb />
            </ScrollTrack>
          </ListBox>
        </ListColumn>
        <Actions>
          <PushButton $w={132} $h={27} $start><PlusIcon />Нов</PushButton>
          <PushButton $w={132} $h={27} $start $framed><CapIcon size={16} />Редактирай</PushButton>
          <PushButton $w={132} $h={27} $start><MinusIcon />Премахни</PushButton>
        </Actions>
      </ListBody>
      <ListFooter>
        <HelpButton $w={83} $start><HelpIcon />Помощ</HelpButton>
      </ListFooter>
    </Dialog>
  );
}

function TeacherDialog() {
  const nameRef = useRef(null);
  useEffect(() => {
    nameRef.current.focus();
    nameRef.current.select();
  }, []);
  return (
    <Dialog $x={194} $y={347} $w={789} $h={510} $front aria-label="Учител">
      <DialogTitle $h={25} $pad={3}>
        <h2>Учител</h2>
        <Controls>
          <ControlButton $w={31} aria-label="Затвори"><WindowGlyph kind="close" /></ControlButton>
        </Controls>
      </DialogTitle>
      <Form onSubmit={(e) => e.preventDefault()}>
        <FormColumns>
          <FormColumn $top={31}>
            <Fields $rows="34px 31px 62px" $pad={5}>
              <Field>
                <FieldLabel htmlFor="name" $w={119}>Име :</FieldLabel>
                <TextInput id="name" ref={nameRef} $w={230} defaultValue="Тестов Димитрова" />
                <AddButton type="button" $w={19} $h={18}>+</AddButton>
              </Field>
              <Field>
                <FieldLabel htmlFor="short" $w={119}>Съкращение:</FieldLabel>
                <TextInput id="short" $w={90} defaultValue="Т.Димитрова" />
                <CheckLabel><CheckBox type="checkbox" />Мъж</CheckLabel>
              </Field>
              <Field>
                <FieldLabel htmlFor="norm" $w={119}>Норматив на учител</FieldLabel>
                <TextInput id="norm" $w={90} />
                <Hint>(по избор)</Hint>
              </Field>
            </Fields>
            <Group $h={70} $pad="17px 9px 0" $justify="flex-end">
              <Legend $indent={-4}>Класен ръководител за клас</Legend>
              <PushButton type="button" $w={120} $h={23} $flat>Промяна</PushButton>
            </Group>
            <Group $h={105} $mt={8} $pad="8px 11px 0" $justify="flex-start">
              <Legend $indent={-6}>Цвят</Legend>
              <ColourBox />
              <ColourAction><PushButton type="button" $w={118}>Промяна</PushButton></ColourAction>
            </Group>
          </FormColumn>
          <FormColumn $top={20}>
            <Fields $rows="22px 69px 47px">
              <Field>
                <FieldLabel htmlFor="mail" $w={83} $multi>Електронна поща :</FieldLabel>
                <TextInput id="mail" $w={188} />
              </Field>
              <Field>
                <FieldLabel htmlFor="phone" $w={83}>Телефон :</FieldLabel>
                <TextInput id="phone" $w={188} />
              </Field>
              <Field>
                <FieldLabel htmlFor="number" $w={83}>Номер:</FieldLabel>
                <TextInput id="number" $w={138} />
              </Field>
            </Fields>
            <Group $h={70} $pad="18px 14px 0 6px">
              <Legend>Класни стаи</Legend>
              <PushButton type="button" $w={273} $h={25}>Класни стаи</PushButton>
            </Group>
            <Group $h={97} $mt={15} $pad="27px 14px 0 6px">
              <PushButton type="button" $w={271}>Персонализирани полета</PushButton>
            </Group>
            <FramedArea>
              <Group $h={46} $pad="1px 9px 0" $justify="flex-end">
                <Legend $indent={-3}>Одобрение (Лиценз)</Legend>
                <PushButton type="button" $w={73}>Промяна</PushButton>
              </Group>
            </FramedArea>
          </FormColumn>
        </FormColumns>
        <FormFooter>
          <PushButton type="submit" $w={73} $primary>ОК</PushButton>
          <PushButton type="button" $w={73}>Откажи</PushButton>
        </FormFooter>
      </Form>
    </Dialog>
  );
}

export default function App() {
  return (
    <>
      <GlobalStyle />
      <Desktop>
        <TitleBar>
          <AppLogo><BellIcon /></AppLogo>
          <AppTitle>{'aSc Разписание на часовете 2020  - [Raboten.roz]'}</AppTitle>
        </TitleBar>
        <TabBar>
          {TABS.map((t) => <Tab key={t} $strong={t === 'Основен'} $active={t === 'Задание'}>{t}</Tab>)}
        </TabBar>
        <Ribbon>
          <RibbonButton $w={40}><BackIcon />Назад</RibbonButton>
          <RibbonDivider />
          <RibbonButton $w={66}><WandIcon />Помощник</RibbonButton>
          <RibbonDivider />
          <RibbonButton $w={54}><SchoolIcon />Училище</RibbonButton>
          <RibbonButton $w={58}><BookIcon />Предмети</RibbonButton>
          <RibbonButton $w={46}><PeopleIcon />Класове</RibbonButton>
          <RibbonButton $w={43}><DoorIcon /><span>Класни<br />стаи</span></RibbonButton>
          <RibbonButton $w={49} $active><CapIcon />Учители</RibbonButton>
          <RibbonButton $w={112} $spaced><StudentIcon />Ученици/Семинари</RibbonButton>
          <RibbonButton $w={42}><LinksIcon />Връзки</RibbonButton>
          <RibbonButton $w={126}><FenceIcon /><span>Списък на въведените<br />ограничения</span></RibbonButton>
          <RibbonDivider />
          <RibbonButton $w={56}><ChangeIcon />Промени</RibbonButton>
          <RibbonDivider />
        </Ribbon>
        <TimetableView><WeekTable /></TimetableView>
        <Splitter />
        <LowerPanel><PreviewPane /></LowerPanel>
        <StatusBar>Ready</StatusBar>
        <TeachersDialog />
        <TeacherDialog />
      </Desktop>
    </>
  );
}
